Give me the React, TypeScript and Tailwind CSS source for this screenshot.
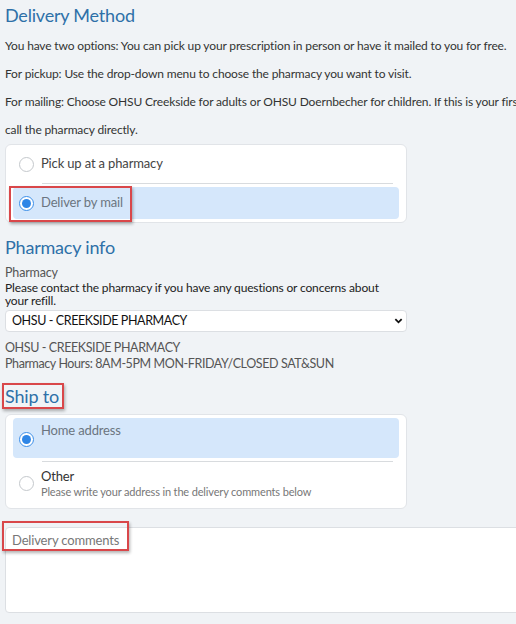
import { useState } from "react";

const Radio = ({ checked }: { checked: boolean }) => (
    <span
        className={
            "flex h-[15px] w-[15px] shrink-0 items-center justify-center rounded-full border bg-white " +
            (checked ? "border-[#3b8ee8]" : "border-[#c4c8cc]")
        }
    >
        {checked && <span className="h-[9px] w-[9px] rounded-full bg-[#2f86e6]" />}
    </span>
);

const App = () => {
    const [method, setMethod] = useState<string>("mail");
    const [shipTo, setShipTo] = useState<string>("home");

    return (
        <div
            className="min-h-[624px] w-[516px] overflow-hidden bg-[#f0f3f6] pt-[3px] text-[#333] text-[12px] tracking-[-0.15px]"
            style={{ fontFamily: "Lato, 'Noto Sans', sans-serif" }}
        >
            {/* Delivery method */}
            <h2 className="px-[5px] text-[18px] leading-[24px] tracking-[-0.2px] text-[#2e70a8]">Delivery Method</h2>
            <div className="mt-[10px] space-y-[10px] whitespace-nowrap px-[5px] leading-[18px]">
                <p>You have two options: You can pick up your prescription in person or have it mailed to you for free.</p>
                <p>For pickup: Use the drop-down menu to choose the pharmacy you want to visit.</p>
                <p>
                    For mailing: Choose OHSU Creekside for adults or OHSU Doernbecher for children. If this is your first time using mail order,
                </p>
                <p>call the pharmacy directly.</p>
            </div>

            <div className="ml-[5px] mt-[5px] w-[402px] rounded-md border border-[#e1e4e8] bg-white px-[7px] py-[3px]">
                <button
                    onClick={() => setMethod("pickup")}
                    className={"flex h-[32px] w-full items-center gap-[7px] rounded px-[6px] " + (method === "pickup" ? "bg-[#d5e7fb]" : "")}
                >
                    <Radio checked={method === "pickup"} />
                    <span className="text-[13px] text-[#444]">Pick up at a pharmacy</span>
                </button>
                <div className="ml-[29px] mr-[6px] mt-[3px] border-t border-[#d8dbde]" />
                <button
                    onClick={() => setMethod("mail")}
                    className={"relative mt-[3px] flex h-[32px] w-full items-center gap-[7px] rounded px-[6px] " + (method === "mail" ? "bg-[#d5e7fb]" : "")}
                >
                    <span className="absolute -left-[4px] -top-[1px] h-[36px] w-[123px] border-2 border-[#d9474a] shadow-[1px_2px_3px_rgba(0,0,0,0.3)]" />
                    <Radio checked={method === "mail"} />
                    <span className="text-[13px] text-[#6b7580]">Deliver by mail</span>
                </button>
            </div>

            {/* Pharmacy info */}
            <h2 className="mt-[12px] px-[5px] text-[18px] leading-[24px] tracking-[-0.2px] text-[#2e70a8]">Pharmacy info</h2>
            <div className="px-[5px]">
                <p className="mt-[6px] text-[12.5px] leading-[16px] text-[#555]">Pharmacy</p>
                <p className="w-[390px] text-[12px] leading-[13px] text-[#222]">
                    Please contact the pharmacy if you have any questions or concerns about your refill.
                </p>
                <div className="relative mt-[3px] w-[402px]">
                    <select className="h-[22px] w-full appearance-none rounded border border-[#dcdfe3] bg-white px-[6px] text-[12.5px] tracking-[-0.4px] text-[#111] outline-none">
                        <option>OHSU - CREEKSIDE PHARMACY</option>
                        <option>OHSU - DOERNBECHER PHARMACY</option>
                    </select>
                    <svg className="pointer-events-none absolute right-[4px] top-[7px] h-[8px] w-[9px]" viewBox="0 0 10 8">
                        <path d="M1.5 2 L5 5.5 L8.5 2" fill="none" stroke="#111" strokeWidth="2" />
                    </svg>
                </div>
                <div className="mt-[8px] text-[12.5px] leading-[16px] tracking-[-0.4px] text-[#555]">
                    <p>OHSU - CREEKSIDE PHARMACY</p>
                    <p>Pharmacy Hours: 8AM-5PM MON-FRIDAY/CLOSED SAT&amp;SUN</p>
                </div>
            </div>

            {/* Ship to */}
            <div className="mt-[11px] px-[2px]">
                <h2 className="inline-block border-2 border-[#d9474a] px-[1px] pr-[3px] text-[18px] leading-[22px] tracking-[-0.2px] text-[#2e70a8] shadow-[1px_2px_3px_rgba(0,0,0,0.3)]">
                    Ship to
                </h2>
            </div>

            <div className="ml-[5px] mt-[5px] w-[402px] rounded-md border border-[#e1e4e8] bg-white px-[7px] py-[3px]">
                <button
                    onClick={() => setShipTo("home")}
                    className={"flex h-[40px] w-full items-start gap-[7px] rounded px-[6px] pt-[3px] text-left " + (shipTo === "home" ? "bg-[#d5e7fb]" : "")}
                >
                    <span className="mt-[11px]">
                        <Radio checked={shipTo === "home"} />
                    </span>
                    <span className="text-[13px] text-[#6b7580]">Home address</span>
                </button>
                <div className="ml-[29px] mr-[6px] mt-[3px] border-t border-[#d8dbde]" />
                <button
                    onClick={() => setShipTo("other")}
                    className={"flex w-full items-center gap-[7px] rounded px-[6px] py-[6px] text-left " + (shipTo === "other" ? "bg-[#d5e7fb]" : "")}
                >
                    <Radio checked={shipTo === "other"} />
                    <span className="flex flex-col">
                        <span className="text-[13px] leading-[16px] text-[#333]">Other</span>
                        <span className="text-[11px] leading-[15px] text-[#777]">Please write your address in the delivery comments below</span>
                    </span>
                </button>
            </div>

            {/* Delivery comments */}
            <div className="relative ml-[5px] mt-[18px] h-[86px] w-[520px]">
                <textarea
                    placeholder="Delivery comments"
                    className="h-full w-full resize-none rounded-sm border border-[#dcdfe3] bg-white px-[6px] py-[3px] text-[13px] text-[#333] outline-none placeholder:text-[#777]"
                />
                <span className="pointer-events-none absolute -left-[3px] -top-[6px] h-[30px] w-[127px] border-2 border-[#d9474a] shadow-[1px_2px_3px_rgba(0,0,0,0.3)]" />
            </div>
        </div>
    );
};

export default App;
